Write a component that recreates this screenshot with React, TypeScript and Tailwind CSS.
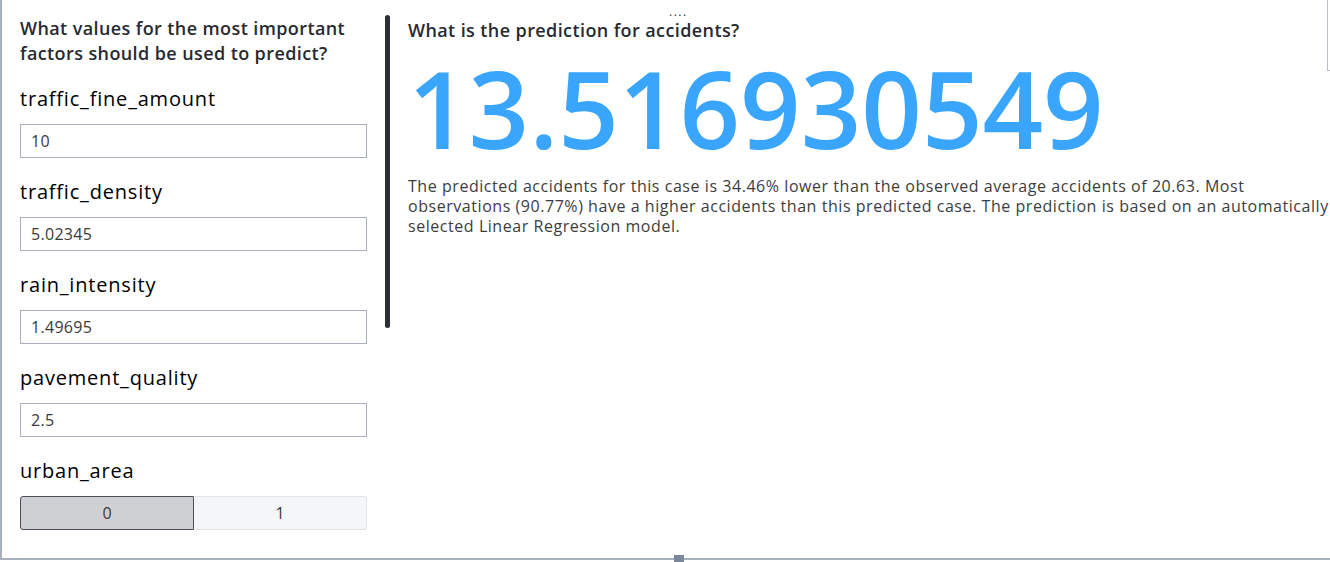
import React from 'react';

const fields = [
  { label: 'traffic_fine_amount', value: '10' },
  { label: 'traffic_density', value: '5.02345' },
  { label: 'rain_intensity', value: '1.49695' },
  { label: 'pavement_quality', value: '2.5' },
];

export default function App() {
  return (
    <div className="relative w-[1330px] h-[562px] bg-white overflow-hidden font-['Open_Sans',sans-serif] text-[#272a30]">
      <div className="flex h-[560px] border-l-2 border-b-2 border-[#a8b0bd]">
        {/* Left: inputs */}
        <div className="w-[365px] pl-[18px] pt-[16px]">
          <h2 className="text-[18px] font-semibold leading-[25px] tracking-[0.4px] w-[345px]">
            What values for the most important factors should be used to predict?
          </h2>
          <div className="mt-[19px] flex flex-col">
            {fields.map((f) => (
              <div key={f.label} className="h-[93px]">
                <div className="text-[20px] leading-[28px] tracking-[0.8px] text-black">{f.label}</div>
                <div className="mt-[11px] w-[347px] h-[34px] border border-[#a9b0bb] flex items-center pl-[10px] text-[16px] tracking-[0.3px] text-[#3a3a3a]">
                  {f.value}
                </div>
              </div>
            ))}
            <div>
              <div className="text-[20px] leading-[28px] tracking-[0.8px] text-black">urban_area</div>
              <div className="mt-[11px] w-[347px] h-[34px] flex text-[16px] text-[#3a3a3a]">
                <div className="flex-1 bg-[#cfd0d3] border border-[#4b4f56] rounded-l-[3px] flex items-center justify-center">0</div>
                <div className="flex-1 bg-[#f5f6f8] border border-l-0 border-[#e1e3e7] rounded-r-[3px] flex items-center justify-center">1</div>
              </div>
            </div>
          </div>
        </div>

        {/* Divider */}
        <div className="pt-[15px] ml-[18px]">
          <div className="w-[5px] h-[313px] bg-[#2b2f36] rounded-full" />
        </div>

        {/* Right: prediction */}
        <div className="flex-1 pl-[18px] pt-[16px]">
          <h2 className="text-[18px] font-semibold leading-[28px] tracking-[0.4px]">What is the prediction for accidents?</h2>
          <div className="mt-[5px] text-[106px] font-semibold leading-[118px] text-[#3aa5fd]">13.516930549</div>
          <p className="mt-[9px] text-[16px] leading-[20px] tracking-[0.55px] text-[#3d3d3d]">
            The predicted accidents for this case is 34.46% lower than the observed average accidents of 20.63. Most
            observations (90.77%) have a higher accidents than this predicted case. The prediction is based on an automatically
            selected Linear Regression model.
          </p>
        </div>
      </div>

      {/* top drag handle */}
      <div className="absolute left-[669px] top-[9px] text-[12px] leading-[6px] tracking-[1.5px] text-[#333]">....</div>
      {/* scroll hint */}
      <div className="absolute right-0 top-0 w-[3px] h-[71px] border-l border-b border-[#b8bec8]" />
      {/* bottom resize handle */}
      <div className="absolute left-[674px] top-[555px] w-[10px] h-[7px] bg-[#7b879a]" />
    </div>
  );
}
